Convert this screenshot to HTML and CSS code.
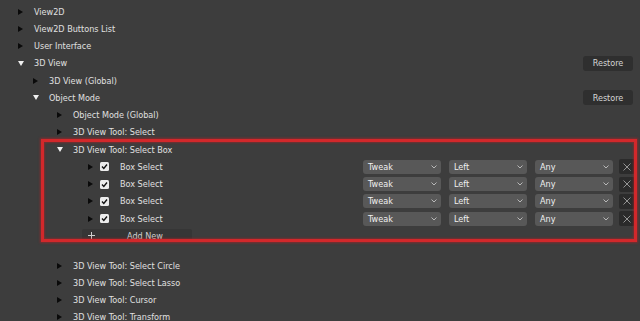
FILE: index.html
```html
<!DOCTYPE html>
<html>
<head>
<meta charset="utf-8">
<link rel="stylesheet" href="styles.css">
</head>
<body>
<div class="panel">
  <div class="row l0"><span class="arw"><svg width="5" height="6" viewBox="0 0 5 6"><polygon points="0,0 5,3 0,6" fill="#0a0a0a"/></svg></span><span class="lbl">View2D</span></div>
  <div class="row l0"><span class="arw"><svg width="5" height="6" viewBox="0 0 5 6"><polygon points="0,0 5,3 0,6" fill="#0a0a0a"/></svg></span><span class="lbl">View2D Buttons List</span></div>
  <div class="row l0"><span class="arw"><svg width="5" height="6" viewBox="0 0 5 6"><polygon points="0,0 5,3 0,6" fill="#0a0a0a"/></svg></span><span class="lbl">User Interface</span></div>
  <div class="row l0"><span class="arw"><svg width="6" height="5" viewBox="0 0 6 5"><polygon points="0,0 6,0 3,5" fill="#f0f0f0"/></svg></span><span class="lbl">3D View</span><button class="restore">Restore</button></div>
  <div class="row l1"><span class="arw"><svg width="5" height="6" viewBox="0 0 5 6"><polygon points="0,0 5,3 0,6" fill="#0a0a0a"/></svg></span><span class="lbl">3D View (Global)</span></div>
  <div class="row l1"><span class="arw"><svg width="6" height="5" viewBox="0 0 6 5"><polygon points="0,0 6,0 3,5" fill="#f0f0f0"/></svg></span><span class="lbl">Object Mode</span><button class="restore">Restore</button></div>
  <div class="row l2"><span class="arw"><svg width="5" height="6" viewBox="0 0 5 6"><polygon points="0,0 5,3 0,6" fill="#0a0a0a"/></svg></span><span class="lbl">Object Mode (Global)</span></div>
  <div class="row l2"><span class="arw"><svg width="5" height="6" viewBox="0 0 5 6"><polygon points="0,0 5,3 0,6" fill="#0a0a0a"/></svg></span><span class="lbl">3D View Tool: Select</span></div>
  <div class="row l2"><span class="arw"><svg width="6" height="5" viewBox="0 0 6 5"><polygon points="0,0 6,0 3,5" fill="#f0f0f0"/></svg></span><span class="lbl">3D View Tool: Select Box</span></div>

  <div class="row l3">
    <span class="arw"><svg width="5" height="6" viewBox="0 0 5 6"><polygon points="0,0 5,3 0,6" fill="#0a0a0a"/></svg></span>
    <span class="chk"><svg width="9" height="9" viewBox="0 0 9 9"><rect x="0" y="0" width="9" height="9" rx="1.5" fill="#ececec"/><polyline points="2,4.6 3.8,6.4 7,2.5" fill="none" stroke="#111" stroke-width="1.4"/></svg></span>
    <span class="lbl">Box Select</span>
    <span class="dd w1">Tweak<svg class="chev" width="6" height="4" viewBox="0 0 6 4"><polyline points="0.5,0.5 3,3 5.5,0.5" fill="none" stroke="#b8b8b8" stroke-width="1"/></svg></span>
    <span class="dd">Left<svg class="chev" width="6" height="4" viewBox="0 0 6 4"><polyline points="0.5,0.5 3,3 5.5,0.5" fill="none" stroke="#b8b8b8" stroke-width="1"/></svg></span>
    <span class="dd">Any<svg class="chev" width="6" height="4" viewBox="0 0 6 4"><polyline points="0.5,0.5 3,3 5.5,0.5" fill="none" stroke="#b8b8b8" stroke-width="1"/></svg></span>
    <span class="xb"><svg width="8" height="8" viewBox="0 0 8 8"><path d="M0.5 0.5 L7.5 7.5 M7.5 0.5 L0.5 7.5" stroke="#a0a0a0" stroke-width="0.9"/></svg></span>
  </div>
  <div class="row l3">
    <span class="arw"><svg width="5" height="6" viewBox="0 0 5 6"><polygon points="0,0 5,3 0,6" fill="#0a0a0a"/></svg></span>
    <span class="chk"><svg width="9" height="9" viewBox="0 0 9 9"><rect x="0" y="0" width="9" height="9" rx="1.5" fill="#ececec"/><polyline points="2,4.6 3.8,6.4 7,2.5" fill="none" stroke="#111" stroke-width="1.4"/></svg></span>
    <span class="lbl">Box Select</span>
    <span class="dd w1">Tweak<svg class="chev" width="6" height="4" viewBox="0 0 6 4"><polyline points="0.5,0.5 3,3 5.5,0.5" fill="none" stroke="#b8b8b8" stroke-width="1"/></svg></span>
    <span class="dd">Left<svg class="chev" width="6" height="4" viewBox="0 0 6 4"><polyline points="0.5,0.5 3,3 5.5,0.5" fill="none" stroke="#b8b8b8" stroke-width="1"/></svg></span>
    <span class="dd">Any<svg class="chev" width="6" height="4" viewBox="0 0 6 4"><polyline points="0.5,0.5 3,3 5.5,0.5" fill="none" stroke="#b8b8b8" stroke-width="1"/></svg></span>
    <span class="xb"><svg width="8" height="8" viewBox="0 0 8 8"><path d="M0.5 0.5 L7.5 7.5 M7.5 0.5 L0.5 7.5" stroke="#a0a0a0" stroke-width="0.9"/></svg></span>
  </div>
  <div class="row l3">
    <span class="arw"><svg width="5" height="6" viewBox="0 0 5 6"><polygon points="0,0 5,3 0,6" fill="#0a0a0a"/></svg></span>
    <span class="chk"><svg width="9" height="9" viewBox="0 0 9 9"><rect x="0" y="0" width="9" height="9" rx="1.5" fill="#ececec"/><polyline points="2,4.6 3.8,6.4 7,2.5" fill="none" stroke="#111" stroke-width="1.4"/></svg></span>
    <span class="lbl">Box Select</span>
    <span class="dd w1">Tweak<svg class="chev" width="6" height="4" viewBox="0 0 6 4"><polyline points="0.5,0.5 3,3 5.5,0.5" fill="none" stroke="#b8b8b8" stroke-width="1"/></svg></span>
    <span class="dd">Left<svg class="chev" width="6" height="4" viewBox="0 0 6 4"><polyline points="0.5,0.5 3,3 5.5,0.5" fill="none" stroke="#b8b8b8" stroke-width="1"/></svg></span>
    <span class="dd">Any<svg class="chev" width="6" height="4" viewBox="0 0 6 4"><polyline points="0.5,0.5 3,3 5.5,0.5" fill="none" stroke="#b8b8b8" stroke-width="1"/></svg></span>
    <span class="xb"><svg width="8" height="8" viewBox="0 0 8 8"><path d="M0.5 0.5 L7.5 7.5 M7.5 0.5 L0.5 7.5" stroke="#a0a0a0" stroke-width="0.9"/></svg></span>
  </div>
  <div class="row l3">
    <span class="arw"><svg width="5" height="6" viewBox="0 0 5 6"><polygon points="0,0 5,3 0,6" fill="#0a0a0a"/></svg></span>
    <span class="chk"><svg width="9" height="9" viewBox="0 0 9 9"><rect x="0" y="0" width="9" height="9" rx="1.5" fill="#ececec"/><polyline points="2,4.6 3.8,6.4 7,2.5" fill="none" stroke="#111" stroke-width="1.4"/></svg></span>
    <span class="lbl">Box Select</span>
    <span class="dd w1">Tweak<svg class="chev" width="6" height="4" viewBox="0 0 6 4"><polyline points="0.5,0.5 3,3 5.5,0.5" fill="none" stroke="#b8b8b8" stroke-width="1"/></svg></span>
    <span class="dd">Left<svg class="chev" width="6" height="4" viewBox="0 0 6 4"><polyline points="0.5,0.5 3,3 5.5,0.5" fill="none" stroke="#b8b8b8" stroke-width="1"/></svg></span>
    <span class="dd">Any<svg class="chev" width="6" height="4" viewBox="0 0 6 4"><polyline points="0.5,0.5 3,3 5.5,0.5" fill="none" stroke="#b8b8b8" stroke-width="1"/></svg></span>
    <span class="xb"><svg width="8" height="8" viewBox="0 0 8 8"><path d="M0.5 0.5 L7.5 7.5 M7.5 0.5 L0.5 7.5" stroke="#a0a0a0" stroke-width="0.9"/></svg></span>
  </div>
  <div class="row addrow">
    <button class="addnew"><svg class="plus" width="7" height="7" viewBox="0 0 7 7"><path d="M3.5 0 V7 M0 3.5 H7" stroke="#cfcfcf" stroke-width="1"/></svg><span class="addtxt">Add New</span></button>
  </div>

  <div class="lower">
    <div class="row l2"><span class="arw"><svg width="5" height="6" viewBox="0 0 5 6"><polygon points="0,0 5,3 0,6" fill="#0a0a0a"/></svg></span><span class="lbl">3D View Tool: Select Circle</span></div>
    <div class="row l2"><span class="arw"><svg width="5" height="6" viewBox="0 0 5 6"><polygon points="0,0 5,3 0,6" fill="#0a0a0a"/></svg></span><span class="lbl">3D View Tool: Select Lasso</span></div>
    <div class="row l2"><span class="arw"><svg width="5" height="6" viewBox="0 0 5 6"><polygon points="0,0 5,3 0,6" fill="#0a0a0a"/></svg></span><span class="lbl">3D View Tool: Cursor</span></div>
    <div class="row l2"><span class="arw"><svg width="5" height="6" viewBox="0 0 5 6"><polygon points="0,0 5,3 0,6" fill="#0a0a0a"/></svg></span><span class="lbl">3D View Tool: Transform</span></div>
  </div>

  <div class="highlight"></div>
</div>
</body>
</html>
```

FILE: styles.css
```css
html, body {
  margin: 0;
  padding: 0;
  background: #3d3d3d;
  overflow: hidden;
}

.panel {
  position: relative;
  width: 640px;
  height: 321px;
  padding-top: 3px;
  box-sizing: border-box;
  font-family: "DejaVu Sans", sans-serif;
  font-size: 8.1px;
  color: #e0e0e0;
}

.row {
  display: flex;
  align-items: center;
  height: 17.25px;
  padding-right: 7px;
  box-sizing: border-box;
}

.arw {
  display: flex;
  align-items: center;
  flex: none;
}

.l0 { padding-left: 18px; }
.l0 .arw { width: 16px; }
.l1 { padding-left: 33px; }
.l1 .arw { width: 16px; }
.l2 { padding-left: 57px; }
.l2 .arw { width: 16px; }
.l3 { padding-left: 88px; padding-right: 5px; }
.l3 .arw { width: 12px; }

.lbl {
  white-space: nowrap;
}

.chk {
  display: flex;
  width: 9px;
  height: 9px;
  margin-right: 11px;
  flex: none;
}

.restore {
  margin-left: auto;
  width: 50px;
  height: 15px;
  border: none;
  border-radius: 3px;
  background: #2f2f2f;
  color: #d4d4d4;
  font: inherit;
  padding: 0;
}

.dd {
  position: relative;
  display: flex;
  align-items: center;
  width: 78px;
  height: 14px;
  margin-left: 8px;
  padding-left: 5px;
  box-sizing: border-box;
  background: #585858;
  border-radius: 3px;
  color: #f0f0f0;
  flex: none;
}

.dd.w1 { margin-left: auto; }

.chev {
  margin-left: auto;
  margin-right: 4px;
}

.xb {
  display: flex;
  align-items: center;
  justify-content: center;
  width: 16px;
  height: 15px;
  margin-left: 6px;
  background: #2b2b2b;
  border-radius: 2px;
  flex: none;
}

.addrow {
  padding-left: 82px;
}

.addnew {
  display: flex;
  align-items: center;
  width: 110px;
  height: 13px;
  padding: 0 0 0 6px;
  border: none;
  border-radius: 2px;
  background: #363636;
  color: #cfcfcf;
  font: inherit;
}

.addtxt {
  margin-left: 32px;
}

.lower {
  margin-top: 13px;
}

.lower .row {
  height: 17px;
}

.highlight {
  position: absolute;
  left: 41px;
  top: 139px;
  width: 596px;
  height: 103px;
  box-sizing: border-box;
  border: 3px solid #d2282b;
  box-shadow: 0 0 2px 1px rgba(190, 30, 35, 0.55), inset 0 0 2px 1px rgba(190, 30, 35, 0.45);
  pointer-events: none;
}
```
